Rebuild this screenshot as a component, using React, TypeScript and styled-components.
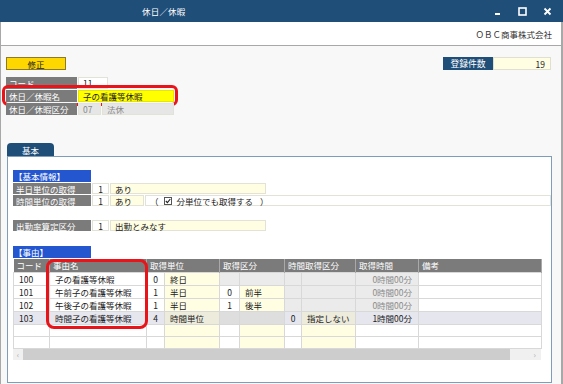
import React from 'react';
import styled, { createGlobalStyle, css } from 'styled-components';

const FONT = `"Noto Sans CJK JP", "Noto Sans", sans-serif`;

const Global = createGlobalStyle`
  html, body { margin: 0; padding: 0; }
  body { font-family: ${FONT}; font-size: 8.5px; color: #222; background: #fff; }
  * { box-sizing: border-box; }
`;

const Window = styled.div`
  width: 563px;
  height: 384px;
  display: flex;
  flex-direction: column;
  overflow: hidden;
  background: #f8f8f8;
`;

const TitleBar = styled.div`
  height: 22px;
  flex: none;
  background: #1f4e79;
  color: #fff;
  display: flex;
  align-items: center;
  padding-left: 142px;
  padding-right: 3px;
`;

const Title = styled.span`
  font-size: 8.5px;
  letter-spacing: 0.2px;
`;

const Controls = styled.div`
  margin-left: auto;
  display: flex;
`;

const Ctl = styled.div`
  width: 25px;
  height: 22px;
  display: flex;
  align-items: center;
  justify-content: center;
`;

const CompanyBar = styled.div`
  height: 24px;
  flex: none;
  background: #fff;
  border-left: 1px solid #a8a8a8;
  border-right: 2px solid #a8a8a8;
  border-bottom: 1px solid #a8a8a8;
  display: flex;
  align-items: center;
  justify-content: flex-end;
  padding-right: 9px;
  font-size: 8.5px;
  color: #333;
`;

const Body = styled.div`
  flex: 1;
  border-left: 1px solid #a8a8a8;
  border-right: 2px solid #a8a8a8;
  display: flex;
  flex-direction: column;
  padding: 11px 10px 1px 5px;
`;

const TopRow = styled.div`
  display: flex;
  justify-content: space-between;
  align-items: flex-start;
`;

const LeftCol = styled.div`
  display: flex;
  flex-direction: column;
`;

const EditButton = styled.div`
  width: 60px;
  height: 13px;
  background: #ffd700;
  border: 1px solid #8a7a2a;
  display: flex;
  align-items: center;
  justify-content: center;
  color: #222;
  margin-bottom: 7px;
`;

const Rows = styled.div`
  display: flex;
  flex-direction: column;
  gap: 1px;
`;

const FieldRow = styled.div<{ $h?: number }>`
  display: flex;
  gap: 1px;
  height: ${(p) => p.$h ?? 12}px;
  position: relative;
`;

const Label = styled.div<{ $w: number; $c?: string }>`
  width: ${(p) => p.$w}px;
  background: ${(p) => p.$c ?? '#7b7b7b'};
  color: #fff;
  display: flex;
  align-items: center;
  padding-left: 3px;
  white-space: nowrap;
`;

type Tone = 'white' | 'yellow' | 'bright' | 'gray' | 'cream';
const toneBg: Record<Tone, string> = {
  white: '#ffffff',
  yellow: '#fffde2',
  bright: '#ffff00',
  gray: '#e6e6e6',
  cream: '#fffbe0',
};

const Value = styled.div<{ $w: number; $tone: Tone; $center?: boolean; $right?: boolean }>`
  width: ${(p) => p.$w}px;
  background: ${(p) => toneBg[p.$tone]};
  border: 1px solid ${(p) => (p.$tone === 'bright' ? '#e6e600' : '#e2e2d6')};
  display: flex;
  align-items: center;
  justify-content: ${(p) => (p.$center ? 'center' : p.$right ? 'flex-end' : 'flex-start')};
  padding: 0 4px;
  color: ${(p) => (p.$tone === 'gray' ? '#888' : '#222')};
  white-space: nowrap;
`;

const Highlight = styled.div`
  position: absolute;
  left: -4px;
  right: -4px;
  top: -5px;
  bottom: -4px;
  border: 3px solid #e8141a;
  border-radius: 6px;
  pointer-events: none;
`;

const CountBox = styled.div`
  display: flex;
  height: 13px;
`;

const CountLabel = styled.div`
  width: 50px;
  background: #1f4e79;
  color: #fff;
  display: flex;
  align-items: center;
  justify-content: center;
  font-size: 8.8px;
`;

const CountValue = styled.div`
  width: 58px;
  background: #fffde2;
  border: 1px solid #e0e0d0;
  display: flex;
  align-items: center;
  justify-content: flex-end;
  padding-right: 5px;
`;

const Tab = styled.div`
  margin-top: 28px;
  margin-left: 1px;
  width: 47px;
  height: 13px;
  background: #1f4e79;
  color: #fff;
  border-radius: 4px 4px 0 0;
  display: flex;
  align-items: center;
  justify-content: center;
`;

const Panel = styled.div`
  flex: 1;
  margin-left: 1px;
  width: 545px;
  background: #fff;
  border: 1px solid #7f9db9;
  padding: 13px 0 0 5px;
  display: flex;
  flex-direction: column;
`;

const SectionHead = styled.div`
  width: 78px;
  height: 12px;
  background: #2356cf;
  color: #fff;
  display: flex;
  align-items: center;
  padding-left: 1px;
  margin-bottom: 1px;
`;

const Gap = styled.div<{ $h: number }>`
  height: ${(p) => p.$h}px;
`;

const OptionArea = styled.div`
  flex: 1;
  display: flex;
  align-items: center;
  border: 1px solid #e2e2d6;
  background: #fff;
  padding-left: 4px;
  gap: 4px;
  white-space: nowrap;
`;

const Check = styled.span`
  display: inline-flex;
  width: 8px;
  height: 8px;
  border: 1px solid #555;
  background: #fff;
  align-items: center;
  justify-content: center;
  margin: 0 1px;
`;

const TableWrap = styled.div`
  position: relative;
  width: 528px;
`;

const Grid = styled.table`
  border-collapse: collapse;
  table-layout: fixed;
  width: 528px;
`;

const Th = styled.th`
  height: 13px;
  padding: 0 0 0 3px;
  background: #7b7b7b;
  color: #fff;
  font-weight: normal;
  text-align: left;
  border-right: 1px solid #a9a9a9;
  white-space: nowrap;
  overflow: hidden;
`;

type CellKind = 'white' | 'yellow' | 'gray';
const cellBg = (k: CellKind, sel: boolean) => {
  if (sel) {
    if (k === 'yellow') return '#ecebdc';
    if (k === 'gray') return '#dedede';
    return '#e6e6ef';
  }
  if (k === 'yellow') return '#fffee2';
  if (k === 'gray') return '#ebebeb';
  return '#ffffff';
};

const Td = styled.td<{ $k: CellKind; $sel: boolean; $align?: 'left' | 'center' | 'right'; $dim?: boolean }>`
  height: 12px;
  padding: 0 ${(p) => (p.$align === 'right' ? '6px' : '0')} 0 ${(p) => (p.$align === 'center' ? '0' : '5px')};
  border: 1px solid #d8d8d8;
  background: ${(p) => cellBg(p.$k, p.$sel)};
  text-align: ${(p) => p.$align ?? 'left'};
  color: ${(p) => (p.$dim ? '#8a8a8a' : '#222')};
  white-space: nowrap;
  overflow: hidden;
  line-height: 12px;
`;

const TableHighlight = styled.div`
  position: absolute;
  left: 33px;
  top: 0;
  width: 102px;
  height: 70px;
  border: 3px solid #e8141a;
  border-radius: 8px;
  pointer-events: none;
`;

const ScrollBar = styled.div`
  width: 528px;
  height: 11px;
  background: #f0f0f0;
  display: flex;
  align-items: center;
  color: #aaa;
  font-size: 8px;
`;

const Arrow = styled.div<{ $w: number }>`
  width: ${(p) => p.$w}px;
  height: 100%;
  display: flex;
  align-items: center;
  justify-content: center;
`;

const Thumb = styled.div`
  width: 487px;
  height: 100%;
  background: #cdcdcd;
`;

type Row = {
  code: string;
  name: string;
  u: string;
  un: string;
  k: string;
  kn: string;
  kOff: boolean;
  t: string;
  tn: string;
  tOff: boolean;
  time: string;
  timeOff: boolean;
  sel?: boolean;
};

const rows: Row[] = [
  { code: '100', name: '子の看護等休暇', u: '0', un: '終日', k: '', kn: '', kOff: true, t: '', tn: '', tOff: true, time: '0時間00分', timeOff: true },
  { code: '101', name: '午前子の看護等休暇', u: '1', un: '半日', k: '0', kn: '前半', kOff: false, t: '', tn: '', tOff: true, time: '0時間00分', timeOff: true },
  { code: '102', name: '午後子の看護等休暇', u: '1', un: '半日', k: '1', kn: '後半', kOff: false, t: '', tn: '', tOff: true, time: '0時間00分', timeOff: true },
  { code: '103', name: '時間子の看護等休暇', u: '4', un: '時間単位', k: '', kn: '', kOff: true, t: '0', tn: '指定しない', tOff: false, time: '1時間00分', timeOff: false, sel: true },
  { code: '', name: '', u: '', un: '', k: '', kn: '', kOff: false, t: '', tn: '', tOff: false, time: '', timeOff: false },
  { code: '', name: '', u: '', un: '', k: '', kn: '', kOff: false, t: '', tn: '', tOff: false, time: '', timeOff: false },
];

const colWidths = [36, 97, 18, 55, 20, 45, 17, 54, 63, 123];

export default function App() {
  return (
    <>
      <Global />
      <Window>
        <TitleBar>
          <Title>休日／休暇</Title>
          <Controls>
            <Ctl>
              <svg width="8" height="8" viewBox="0 0 8 8"><rect x="1" y="6" width="5" height="2" fill="#fff" /></svg>
            </Ctl>
            <Ctl>
              <svg width="9" height="9" viewBox="0 0 9 9"><rect x="1" y="1" width="7" height="7" fill="none" stroke="#fff" strokeWidth="1.6" /></svg>
            </Ctl>
            <Ctl>
              <svg width="9" height="9" viewBox="0 0 9 9"><path d="M1.5 1.5 L7.5 7.5 M7.5 1.5 L1.5 7.5" stroke="#fff" strokeWidth="1.8" /></svg>
            </Ctl>
          </Controls>
        </TitleBar>
        <CompanyBar>ＯＢＣ商事株式会社</CompanyBar>
        <Body>
          <TopRow>
            <LeftCol>
              <EditButton>修正</EditButton>
              <Rows>
                <FieldRow>
                  <Label $w={71}>コード</Label>
                  <Value $w={30} $tone="white">11</Value>
                </FieldRow>
                <FieldRow>
                  <Label $w={71}>休日／休暇名</Label>
                  <Value $w={96} $tone="bright">子の看護等休暇</Value>
                  <Highlight />
                </FieldRow>
                <FieldRow>
                  <Label $w={71}>休日／休暇区分</Label>
                  <Value $w={23} $tone="gray">07</Value>
                  <Value $w={72} $tone="gray">法休</Value>
                </FieldRow>
              </Rows>
            </LeftCol>
            <CountBox>
              <CountLabel>登録件数</CountLabel>
              <CountValue>19</CountValue>
            </CountBox>
          </TopRow>

          <Tab>基本</Tab>
          <Panel>
            <SectionHead>【基本情報】</SectionHead>
            <Rows>
              <FieldRow $h={11}>
                <Label $w={78}>半日単位の取得</Label>
                <Value $w={17} $tone="white" $center>1</Value>
                <Value $w={156} $tone="yellow">あり</Value>
              </FieldRow>
              <FieldRow $h={11}>
                <Label $w={78}>時間単位の取得</Label>
                <Value $w={17} $tone="white" $center>1</Value>
                <Value $w={34} $tone="yellow">あり</Value>
                <OptionArea>
                  <span>（</span>
                  <Check>
                    <svg width="6" height="6" viewBox="0 0 6 6"><path d="M0.8 3 L2.4 4.6 L5.3 1" fill="none" stroke="#222" strokeWidth="1.1" /></svg>
                  </Check>
                  <span>分単位でも取得する</span>
                  <span style={{ marginLeft: 3 }}>）</span>
                </OptionArea>
              </FieldRow>
            </Rows>
            <Gap $h={14} />
            <Rows>
              <FieldRow $h={11}>
                <Label $w={78}>出勤率算定区分</Label>
                <Value $w={17} $tone="white" $center>1</Value>
                <Value $w={156} $tone="yellow">出勤とみなす</Value>
              </FieldRow>
            </Rows>
            <Gap $h={15} />
            <SectionHead>【事由】</SectionHead>
            <TableWrap>
              <Grid>
                <colgroup>
                  {colWidths.map((w, i) => (
                    <col key={i} style={{ width: w }} />
                  ))}
                </colgroup>
                <thead>
                  <tr>
                    <Th>コード</Th>
                    <Th>事由名</Th>
                    <Th colSpan={2}>取得単位</Th>
                    <Th colSpan={2}>取得区分</Th>
                    <Th colSpan={2}>時間取得区分</Th>
                    <Th>取得時間</Th>
                    <Th>備考</Th>
                  </tr>
                </thead>
                <tbody>
                  {rows.map((r, i) => {
                    const sel = !!r.sel;
                    return (
                      <tr key={i}>
                        <Td $k="white" $sel={sel}>{r.code}</Td>
                        <Td $k="white" $sel={sel}>{r.name}</Td>
                        <Td $k="white" $sel={sel} $align="center">{r.u}</Td>
                        <Td $k="yellow" $sel={sel}>{r.un}</Td>
                        <Td $k={r.kOff ? 'gray' : 'white'} $sel={sel} $align="center">{r.k}</Td>
                        <Td $k={r.kOff ? 'gray' : 'yellow'} $sel={sel}>{r.kn}</Td>
                        <Td $k={r.tOff ? 'gray' : 'white'} $sel={sel} $align="center">{r.t}</Td>
                        <Td $k={r.tOff ? 'gray' : 'yellow'} $sel={sel}>{r.tn}</Td>
                        <Td $k={r.timeOff ? 'gray' : 'white'} $sel={sel} $align="right" $dim={r.timeOff}>{r.time}</Td>
                        <Td $k="white" $sel={sel}></Td>
                      </tr>
                    );
                  })}
                </tbody>
              </Grid>
              <TableHighlight />
            </TableWrap>
            <ScrollBar>
              <Arrow $w={10}>‹</Arrow>
              <Thumb />
              <Arrow $w={31} style={{ justifyContent: 'flex-end', paddingRight: 5 }}>›</Arrow>
            </ScrollBar>
          </Panel>
        </Body>
      </Window>
    </>
  );
}
